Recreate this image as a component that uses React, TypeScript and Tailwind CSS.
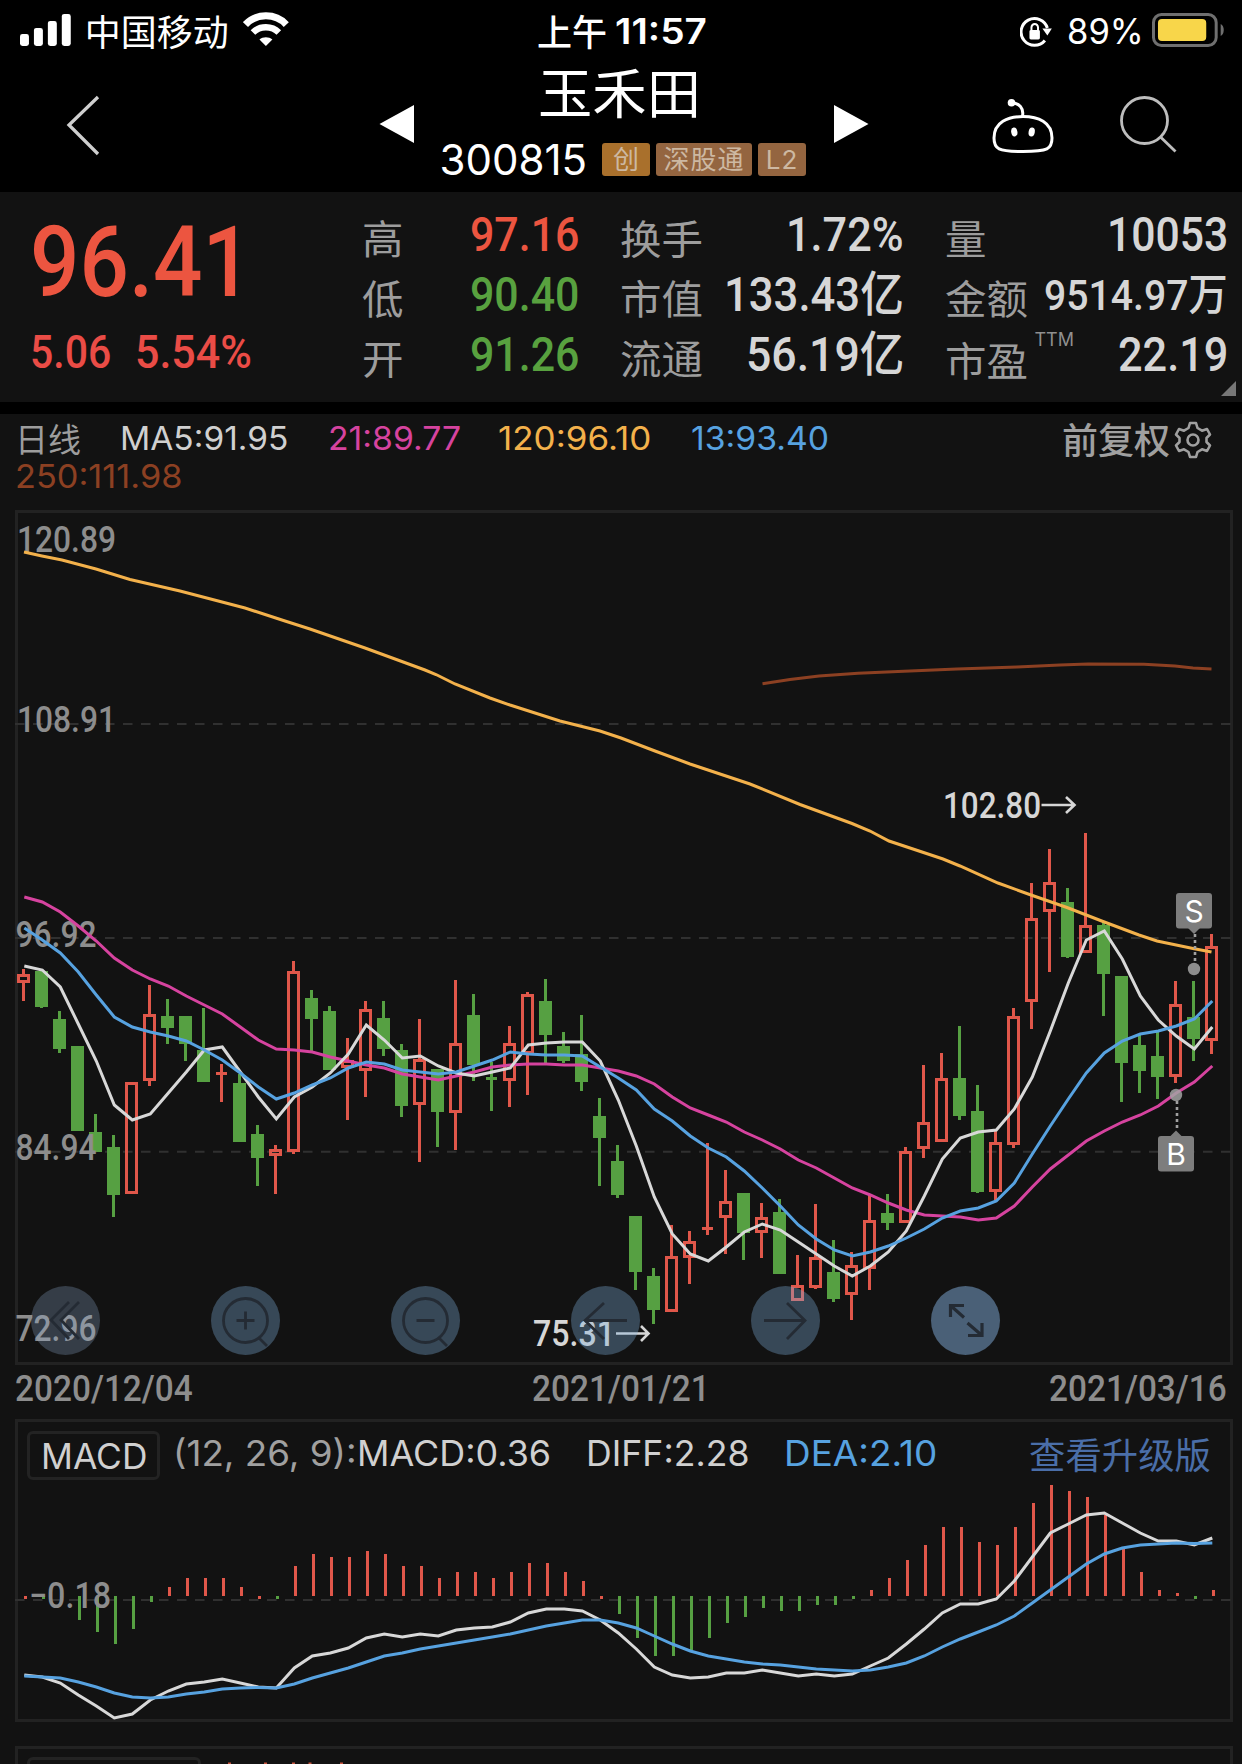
import { useLayoutEffect, useRef, useState } from "react";
import type { ReactNode } from "react";

const RED = "#e0574a";
const GREEN = "#56a042";
const WHITE = "#d8d8d8";
const BLUE = "#57a2e0";
const PINK = "#d6439f";
const ORANGE = "#f3b14b";
const BROWN = "#8c4022";

const DIN = "font-['Roboto','Noto_Sans_CJK_SC',sans-serif] font-medium";
const SANS = "font-['Inter','Noto_Sans_CJK_SC',sans-serif]";
const CJK = "font-['Noto_Sans_CJK_SC',sans-serif]";

/* Single-line text squeezed or stretched horizontally to a fixed width. */
function Fit({ w, box = "", className = "", children }: { w: number; box?: string; className?: string; children: ReactNode }) {
  const ref = useRef<HTMLSpanElement>(null);
  const [scale, setScale] = useState(1);
  useLayoutEffect(() => {
    if (ref.current) setScale(w / ref.current.offsetWidth);
  }, [w]);
  return (
    <span className={`block shrink-0 ${box}`} style={{ width: w }}>
      <span
        ref={ref}
        className={`block w-max origin-left whitespace-pre leading-none ${className}`}
        style={{ transform: `scaleX(${scale})` }}
      >
        {children}
      </span>
    </span>
  );
}

/* [high, body top, body bottom, low, kind]: r rising, g falling, R/G flat day */
type Candle = [number, number, number, number, string];
const CANDLES: Candle[] = [
  [969, 974, 983, 1001, "r"], [971, 971, 1007, 1008, "g"], [1011, 1019, 1049, 1053, "g"], [1046, 1046, 1131, 1131, "g"],
  [1114, 1132, 1152, 1152, "g"], [1135, 1147, 1195, 1217, "g"], [1082, 1082, 1194, 1194, "r"], [985, 1014, 1081, 1086, "r"],
  [999, 1016, 1028, 1044, "g"], [1016, 1016, 1044, 1061, "g"], [1008, 1050, 1082, 1082, "g"], [1064, 1072, 1075, 1102, "R"],
  [1074, 1083, 1142, 1142, "g"], [1125, 1134, 1158, 1186, "g"], [1145, 1149, 1156, 1194, "r"], [961, 971, 1152, 1154, "r"],
  [990, 998, 1019, 1051, "g"], [1006, 1011, 1070, 1070, "g"], [1038, 1060, 1068, 1120, "r"], [1001, 1009, 1071, 1097, "r"],
  [1001, 1018, 1049, 1056, "g"], [1044, 1050, 1106, 1117, "g"], [1019, 1059, 1105, 1162, "r"], [1070, 1069, 1112, 1147, "g"],
  [980, 1043, 1113, 1150, "r"], [994, 1015, 1065, 1081, "g"], [1062, 1077, 1080, 1111, "G"], [1026, 1043, 1081, 1107, "r"],
  [992, 994, 1054, 1095, "r"], [979, 1001, 1035, 1063, "g"], [1032, 1046, 1061, 1063, "g"], [1015, 1054, 1082, 1091, "g"],
  [1098, 1116, 1138, 1186, "g"], [1145, 1161, 1195, 1198, "g"], [1216, 1216, 1272, 1290, "g"], [1268, 1276, 1310, 1324, "g"],
  [1225, 1256, 1312, 1312, "r"], [1231, 1241, 1258, 1284, "r"], [1143, 1227, 1230, 1235, "R"], [1170, 1201, 1218, 1254, "r"],
  [1193, 1193, 1233, 1260, "g"], [1203, 1217, 1233, 1258, "r"], [1199, 1212, 1274, 1274, "g"], [1255, 1285, 1301, 1301, "r"],
  [1204, 1257, 1288, 1289, "r"], [1240, 1272, 1299, 1302, "g"], [1252, 1265, 1295, 1320, "r"], [1194, 1220, 1269, 1290, "r"],
  [1194, 1213, 1223, 1230, "g"], [1147, 1151, 1223, 1223, "r"], [1065, 1122, 1149, 1158, "r"], [1053, 1078, 1142, 1142, "r"],
  [1026, 1078, 1116, 1120, "g"], [1085, 1111, 1192, 1193, "g"], [1130, 1142, 1192, 1200, "r"], [1008, 1016, 1145, 1148, "r"],
  [883, 918, 1002, 1029, "r"], [849, 882, 912, 972, "r"], [888, 902, 957, 958, "g"], [833, 925, 953, 953, "r"],
  [922, 925, 974, 1016, "g"], [976, 976, 1063, 1102, "g"], [1035, 1045, 1071, 1093, "g"], [1032, 1056, 1077, 1099, "g"],
  [981, 1004, 1077, 1083, "r"], [981, 1017, 1039, 1061, "g"], [934, 946, 1041, 1054, "r"],
];

const MA5 = [966, 970, 987, 1024, 1061, 1105, 1120, 1114, 1093, 1072, 1050, 1047, 1072, 1097, 1119, 1097, 1087, 1073, 1054, 1025, 1040, 1058, 1056, 1066, 1073, 1076, 1072, 1068, 1045, 1043, 1042, 1042, 1061, 1100, 1146, 1197, 1234, 1254, 1261, 1247, 1232, 1224, 1230, 1242, 1254, 1266, 1276, 1266, 1252, 1231, 1196, 1159, 1138, 1132, 1130, 1109, 1077, 1031, 983, 940, 931, 959, 996, 1020, 1036, 1049, 1027];
const MA13 = [928, 940, 953, 972, 995, 1017, 1027, 1032, 1036, 1041, 1050, 1060, 1073, 1087, 1099, 1093, 1085, 1078, 1068, 1062, 1064, 1070, 1072, 1074, 1072, 1066, 1060, 1052, 1054, 1055, 1055, 1056, 1067, 1078, 1090, 1109, 1121, 1136, 1148, 1157, 1171, 1188, 1206, 1225, 1239, 1250, 1256, 1252, 1246, 1238, 1229, 1218, 1211, 1208, 1201, 1183, 1154, 1126, 1099, 1073, 1053, 1041, 1034, 1031, 1026, 1019, 1001];
const MA21 = [897, 902, 912, 926, 941, 958, 970, 979, 986, 996, 1005, 1014, 1027, 1040, 1049, 1050, 1052, 1057, 1061, 1065, 1068, 1074, 1077, 1080, 1076, 1072, 1067, 1065, 1064, 1064, 1065, 1065, 1068, 1071, 1076, 1084, 1097, 1108, 1115, 1122, 1132, 1140, 1149, 1160, 1168, 1178, 1188, 1195, 1203, 1210, 1215, 1216, 1217, 1220, 1218, 1206, 1187, 1169, 1155, 1141, 1131, 1122, 1115, 1106, 1093, 1082, 1066];
const MA120 = "24,552 42,556 62,560 96,569 130,579.5 180,591 245,608 285,621 310,629 365,648 425,670 436,674.5 455,684 490,698 510,705 560,721 600,731 621,738 655,751 690,764 750,784 800,804.5 852,823.5 870,831 889,841 943,859 960,866 998,883 1031,895 1067,907.5 1103,921.5 1139,935 1157,941 1193,948.5 1211.5,952";
const MA250 = "762.5,683.7 790,679.5 819,676 858,673.3 898,671.5 957,669 1017,667 1060,665 1088,664 1144,664.3 1175,666 1193,668 1211.5,669";

const DIFF = [1675, 1677, 1683, 1695, 1706, 1718, 1714, 1700, 1691, 1684, 1682, 1679, 1683, 1687, 1688, 1668, 1656, 1653, 1648, 1638, 1634, 1637, 1634, 1636, 1630, 1628, 1627, 1622, 1613, 1609, 1609, 1611, 1620, 1633, 1649, 1667, 1675, 1678, 1677, 1673, 1673, 1670, 1673, 1676, 1674, 1676, 1674, 1666, 1658, 1644, 1629, 1613, 1604, 1604, 1599, 1581, 1557, 1533, 1524, 1515, 1513, 1523, 1533, 1541, 1541, 1545, 1538];
const DEA = [1676, 1677, 1678, 1682, 1687, 1693, 1697, 1698, 1697, 1694, 1692, 1689, 1688, 1687.5, 1688, 1684, 1678, 1673, 1668, 1662, 1656, 1653, 1649, 1646, 1643, 1640, 1637, 1634, 1630, 1626, 1623, 1620, 1620, 1623, 1628, 1636, 1644, 1651, 1656, 1659, 1662, 1664, 1665, 1667, 1669, 1670, 1671, 1670, 1667, 1663, 1656, 1647, 1639, 1632, 1625, 1616, 1603, 1590, 1577, 1564, 1554, 1548, 1545, 1544, 1543, 1543.5, 1543];

/* Histogram bar lengths: positive above the axis, negative below it. */
const BARS = [-3, -3, -3, -24, -36, -48, -33, -6, 9, 18, 18, 18, 9, -3, -3, 30, 42, 39, 39, 45, 42, 30, 30, 18, 24, 24, 18, 24, 33, 33, 24, 15, -3, -18, -42, -60, -60, -54, -42, -27, -21, -12, -15, -15, -9, -9, -3, 6, 18, 36, 51, 69, 69, 54, 51, 69, 93, 111, 105, 99, 81, 47, 24, 6, 3, -3, 6];
const SMALL_RED = new Set([0, 13, 32]);

const series = (ys: number[]) => ys.map((y, i) => `${24.3 + 18 * i},${y}`).join(" ");

function Line({ points, color, width = 3 }: { points: string; color: string; width?: number }) {
  return <polyline points={points} fill="none" stroke={color} strokeWidth={width} />;
}

function Label({ x, y, w, color = "#8d8d8d", children }: { x: number; y: number; w: number; color?: string; children: string }) {
  return (
    <text x={x} y={y} textLength={w} lengthAdjust="spacingAndGlyphs" fill={color} fontSize="36" className={DIN}>
      {children}
    </text>
  );
}

function CandleMark({ c, i }: { c: Candle; i: number }) {
  const [hi, top, bot, lo, kind] = c;
  const x = 23.5 + 18 * i;
  const up = kind === "r" || kind === "R";
  const color = up ? RED : GREEN;
  if (kind === "R" || kind === "G") {
    return (
      <g fill={color}>
        <rect x={x - 1.5} y={hi} width="3" height={lo - hi} />
        <rect x={x - 5.5} y={top} width="11" height="3" />
      </g>
    );
  }
  return (
    <g fill={color}>
      {top > hi && <rect x={x - 1.5} y={hi} width="3" height={top - hi} />}
      {lo > bot && <rect x={x - 1.5} y={bot} width="3" height={lo - bot} />}
      {up ? (
        <rect x={x - 5} y={top + 1.5} width="10" height={bot - top - 3} fill="none" stroke={color} strokeWidth="3" />
      ) : (
        <rect x={x - 6.5} y={top} width="13" height={bot - top} />
      )}
    </g>
  );
}

function StatusBar() {
  return (
    <div className="flex h-[60px] items-center pl-5 pr-4 text-white">
      <svg width="52" height="34" viewBox="0 0 52 34" fill="#fff">
        <rect x="0" y="21" width="9" height="12" rx="2.5" />
        <rect x="14" y="15" width="9" height="18" rx="2.5" />
        <rect x="28" y="8" width="9" height="25" rx="2.5" />
        <rect x="42" y="1" width="9" height="32" rx="2.5" />
      </svg>
      <Fit w={144} box="ml-[13px]" className={`text-[36px] ${CJK}`}>中国移动</Fit>
      <svg className="ml-[14px]" width="46" height="36" viewBox="0 0 46 36" fill="none" stroke="#fff">
        <path d="M2.5 12.5 C13.5 .8 32.500 .8 43.500 12.500" strokeWidth="7" />
        <path d="M10 20.500 C17 13.500 29 13.500 36 20.500" strokeWidth="6.500" />
        <path d="M16.500 27.500 C20 24.500 26 24.500 29.500 27.500 L23 34 Z" fill="#fff" stroke="none" />
      </svg>
      <Fit w={70} box="ml-[248px]" className={`text-[36px] font-medium ${CJK}`}>上午</Fit>
      <Fit w={92} box="ml-[8px] pt-[3px]" className={`text-[35px] font-semibold ${SANS}`}>11:57</Fit>
      <svg className="ml-[313px] mt-[4px]" width="33" height="34" viewBox="0 0 33 34" fill="none" stroke="#fff">
        <path d="M27.500 13 A13.500 13.500 0 1 0 25 25.500" strokeWidth="3" />
        <path d="M22.500 13.500 H32 L27.500 20.500 Z" fill="#fff" stroke="none" />
        <rect x="9.500" y="15" width="10.500" height="9.500" rx="1.500" fill="#fff" stroke="none" />
        <path d="M11.500 15.500 V12.500 a3.300 3.600 0 0 1 6.600 0 V15.500" strokeWidth="2" />
      </svg>
      <Fit w={77} box="ml-[15px] pt-[3px]" className={`text-[35px] ${SANS}`}>89%</Fit>
      <svg className="ml-[8px]" width="74" height="36" viewBox="0 0 74 36">
        <rect x="1.500" y="2.500" width="63" height="31" rx="8" fill="none" stroke="#6f6f6f" strokeWidth="3" />
        <rect x="6" y="7" width="48.500" height="22" rx="4" fill="#f8d64a" />
        <path d="M69 12 a5 6.500 0 0 1 0 12 Z" fill="#6f6f6f" />
      </svg>
    </div>
  );
}

function TitleBar() {
  return (
    <div className="flex h-[132px] text-white">
      <div className="w-[379px] shrink-0 pl-[65px] pt-[35px]">
        <svg width="36" height="62" viewBox="0 0 36 62" fill="none" stroke="#cfcfcf" strokeWidth="3.300">
          <path d="M33 2 L4 30 L33 59" />
        </svg>
      </div>
      <svg className="mt-[44px] shrink-0" width="35" height="40" viewBox="0 0 35 40" fill="#fff">
        <path d="M0.500 20 L35 1 V39 Z" />
      </svg>
      <div className="w-[420px] shrink-0">
        <div className="flex h-[62px] items-center pl-[124px]">
          <Fit w={163} className={`text-[54px] ${CJK}`}>玉禾田</Fit>
        </div>
        <div className="mt-[4px] flex h-[67px] items-center pl-[25.500px]">
          <Fit w={148} className={`text-[42px] ${SANS}`}>300815</Fit>
          <div className="ml-[14.500px] flex gap-[6px] text-[26px] leading-none text-[#cdb8a2]">
            <span className={`flex h-[33px] w-[48px] items-center justify-center rounded-[3px] bg-[#a9702c] pb-[3px] ${CJK}`}>创</span>
            <span className={`flex h-[33px] w-[96px] items-center justify-center rounded-[3px] bg-[#946540] pb-[3px] tracking-[1px] ${CJK}`}>深股通</span>
            <span className={`flex h-[33px] w-[48px] items-center justify-center rounded-[3px] bg-[#946540] tracking-[1px] ${SANS}`}>L2</span>
          </div>
        </div>
      </div>
      <svg className="mt-[44px] shrink-0" width="35" height="40" viewBox="0 0 35 40" fill="#fff">
        <path d="M34.500 20 L0 1 V39 Z" />
      </svg>
      <svg className="ml-[122px] mt-[37px] shrink-0" width="64" height="60" viewBox="991 97 64 60" fill="none" stroke="#fff" strokeWidth="3">
        <path d="M1023 116.500 C1008 116.500 994 122 994 138 C994 149 998 151.500 1023 151.500 C1048 151.500 1052 149 1052 138 C1052 122 1038 116.500 1023 116.500 Z" />
        <path d="M1012 103 C1019 103 1024 108 1022.500 116" />
        <circle cx="1011.500" cy="102.700" r="3.800" fill="#fff" stroke="none" />
        <ellipse cx="1014.300" cy="132" rx="3.100" ry="4.500" fill="#fff" stroke="none" transform="rotate(-10 1014.300 132)" />
        <ellipse cx="1031.700" cy="132" rx="3.100" ry="4.500" fill="#fff" stroke="none" transform="rotate(10 1031.700 132)" />
      </svg>
      <svg className="ml-[63px] mt-[35px] shrink-0" width="62" height="62" viewBox="1118 95 62 62" fill="none" stroke="#bdbdbd" strokeWidth="2.800">
        <circle cx="1144.500" cy="120.500" r="23" />
        <path d="M1160.500 137 L1175.500 151.500" />
      </svg>
    </div>
  );
}

type Cell = { k: string; v: string; w: number; tone: string; size?: string; sup?: string };

function QuoteColumn({ width, cells }: { width: string; cells: Cell[] }) {
  return (
    <div className={`${width} shrink-0`}>
      {cells.map((c) => (
        <div key={c.k} className="flex h-[60px] items-center justify-between">
          <div className={c.sup ? "flex pt-[7px]" : "flex pt-[3px]"}>
            <Fit w={c.k.length * 41.500} box="-ml-[1.500px]" className={`text-[40px] text-[#9d9d9d] ${CJK}`}>{c.k}</Fit>
            {c.sup && <Fit w={40} box="ml-[7px] -mt-[8px]" className={`text-[18px] text-[#8f8f8f] ${SANS}`}>{c.sup}</Fit>}
          </div>
          <Fit w={c.w} className={`${c.size ?? "text-[48px]"} ${c.tone} ${DIN}`}>{c.v}</Fit>
        </div>
      ))}
    </div>
  );
}

function Quote() {
  return (
    <div className="relative flex h-[210px] bg-[#121212]">
      <div className="w-[363px] shrink-0 pl-[30px] pt-[22px]">
        <Fit w={222} className={`text-[98px] text-[#ec5540] ${DIN}`}>96.41</Fit>
        <div className="mt-[16px] flex gap-[24px] text-[#ea4c46]">
          <Fit w={81} className={`text-[47px] ${DIN}`}>5.06</Fit>
          <Fit w={117} className={`text-[47px] ${DIN}`}>5.54%</Fit>
        </div>
      </div>
      <div className="flex gap-[42px] pt-[13px]">
        <QuoteColumn
          width="w-[216px]"
          cells={[
            { k: "高", v: "97.16", w: 109, tone: "text-[#ec5540]" },
            { k: "低", v: "90.40", w: 109, tone: "text-[#58a13f]" },
            { k: "开", v: "91.26", w: 109, tone: "text-[#58a13f]" },
          ]}
        />
        <QuoteColumn
          width="w-[283px]"
          cells={[
            { k: "换手", v: "1.72%", w: 118, tone: "text-[#d6d6d6]" },
            { k: "市值", v: "133.43亿", w: 180, tone: "text-[#d6d6d6]" },
            { k: "流通", v: "56.19亿", w: 158, tone: "text-[#d6d6d6]" },
          ]}
        />
        <QuoteColumn
          width="w-[282px]"
          cells={[
            { k: "量", v: "10053", w: 121, tone: "text-[#d6d6d6]" },
            { k: "金额", v: "9514.97万", w: 184, tone: "text-[#d6d6d6]", size: "text-[43px]" },
            { k: "市盈", v: "22.19", w: 110, tone: "text-[#d6d6d6]", sup: "TTM" },
          ]}
        />
      </div>
      <svg className="absolute bottom-[6px] right-[6px]" width="15" height="15" viewBox="0 0 15 15" fill="#777">
        <path d="M15 0 V15 H0 Z" />
      </svg>
    </div>
  );
}

function Averages() {
  return (
    <div className="h-[96px] pl-[15px] pt-[6px]">
      <div className="flex h-[38px] items-center">
        <Fit w={66} box="-mt-[2px]" className={`text-[33px] text-[#9d9d9d] ${CJK}`}>日线</Fit>
        <Fit w={168} box="ml-[39px]" className={`text-[32.500px] text-[#d0d0d0] ${SANS}`}>MA5:91.95</Fit>
        <Fit w={133} box="ml-[40px]" className={`text-[32.500px] text-[#d6439f] ${SANS}`}>21:89.77</Fit>
        <Fit w={153} box="ml-[37px]" className={`text-[32.500px] text-[#f3b14b] ${SANS}`}>120:96.10</Fit>
        <Fit w={138} box="ml-[40px]" className={`text-[32.500px] text-[#57a2e0] ${SANS}`}>13:93.40</Fit>
        <Fit w={108} box="ml-[233px] -mt-[2px]" className={`text-[36px] font-medium text-[#a0a0a0] ${CJK}`}>前复权</Fit>
        <svg className="ml-[4px] mt-[2px]" width="38" height="38" viewBox="0 0 38 38" fill="none" stroke="#a0a0a0" strokeWidth="2.600" strokeLinejoin="round">
          <path d="M16 2 H22 L23.500 7 L28 9.700 L33 8 L36 13.500 L32.500 17 V21 L36 24.500 L33 30 L28 28.300 L23.500 31 L22 36 H16 L14.500 31 L10 28.300 L5 30 L2 24.500 L5.500 21 V17 L2 13.500 L5 8 L10 9.700 L14.500 7 Z" />
          <circle cx="19" cy="19" r="5.500" />
        </svg>
      </div>
      <div className="flex h-[38px] items-center">
        <Fit w={168} className={`text-[32.500px] text-[#8c4022] ${SANS}`}>250:111.98</Fit>
      </div>
    </div>
  );
}

const ROUND = "flex size-[69px] items-center justify-center rounded-full";

function ChartButtons() {
  const ink = { width: 69, height: 69, viewBox: "0 0 69 69", fill: "none", stroke: "#242b34", strokeWidth: 2.8 };
  return (
    <div className="absolute left-[16px] top-[776px] flex gap-[111px]">
      <button className={`${ROUND} bg-[rgba(140,170,205,0.29)]`}>
        <svg {...ink}><path d="M38 16 L20 34 L38 53 M48 16 L30 34 L48 53" /></svg>
      </button>
      <button className={`${ROUND} bg-[rgba(127,175,218,0.35)]`}>
        <svg {...ink}><circle cx="34.500" cy="34.500" r="22" /><path d="M34.500 25.500 V43.500 M25.500 34.500 H43.500 M48 52 L56 60" /></svg>
      </button>
      <button className={`${ROUND} bg-[rgba(127,175,218,0.35)]`}>
        <svg {...ink}><circle cx="34.500" cy="34.500" r="22" /><path d="M25.500 34.500 H43.500 M48 52 L56 60" /></svg>
      </button>
      <button className={`${ROUND} bg-[rgba(127,175,218,0.35)]`}>
        <svg {...ink}><path d="M56 34.500 H14 M33 17 L14 34.500 L33 53" /></svg>
      </button>
      <button className={`${ROUND} bg-[rgba(127,175,218,0.35)]`}>
        <svg {...ink}><path d="M13 34.500 H54 M36 17 L54 34.500 L36 53" /></svg>
      </button>
      <button className={`${ROUND} bg-[rgba(130,174,220,0.5)]`}>
        <svg {...ink} strokeWidth={3.2}><path d="M19.500 31 V19.500 H33 M19.500 19.500 L33 31.500 M51 37 V49.500 H37 M51 49.500 L36.500 37" /></svg>
      </button>
    </div>
  );
}

function PriceChart() {
  return (
    <div className="relative ml-[15px] h-[855px] w-[1218px]">
      <svg width="1218" height="855" viewBox="15 510 1218 855">
        <rect x="16.500" y="511.500" width="1215" height="852" fill="none" stroke="#222" strokeWidth="3" />
        {[724, 938, 1151.7].map((y) => (
          <path key={y} d={`M15 ${y} H1231`} stroke="#303030" strokeWidth="2" strokeDasharray="9.500 8.500" />
        ))}
        {CANDLES.map((c, i) => <CandleMark key={i} c={c} i={i} />)}
        <Label x={17} y={551.5} w={99}>120.89</Label>
        <Label x={17} y={732} w={99}>108.91</Label>
        <Label x={15.5} y={946.5} w={81}>96.92</Label>
        <Label x={15.5} y={1160} w={81}>84.94</Label>
        <Label x={15.5} y={1341} w={81}>72.96</Label>
        <Line points={series(MA21)} color={PINK} />
        <Line points={MA120} color={ORANGE} />
        <Line points={MA250} color={BROWN} />
        <Line points={series(MA5)} color={WHITE} />
        <Line points={series(MA13)} color={BLUE} />
        <Label x={943} y={818} w={98} color="#d6d6d6">102.80</Label>
        <path d="M1041.500 805 H1074 M1066 797 L1074.500 805 L1066 813" fill="none" stroke="#d6d6d6" strokeWidth="2.600" />
        <Label x={533} y={1346} w={82} color="#d6d6d6">75.31</Label>
        <path d="M616 1333.500 H648 M641 1326 L648.500 1333.500 L641 1341" fill="none" stroke="#d6d6d6" strokeWidth="2.600" />

        <path d="M1195 934 V964 M1177 1101 V1131" stroke="#a0a0a0" strokeWidth="2.600" strokeDasharray="3 3" />
        <g fill="#7d7d7d">
          <rect x="1176" y="893" width="36" height="35.500" rx="3" />
          <path d="M1188 928 H1200 L1194 934 Z" />
          <rect x="1158" y="1136" width="36" height="35.500" rx="3" />
          <path d="M1170 1136.500 H1182 L1176 1130.500 Z" />
        </g>
        <g fill="#a3a3a3" fillOpacity=".85">
          <circle cx="1194" cy="969" r="6.200" />
          <circle cx="1176" cy="1095" r="6.200" />
        </g>
        <g fill="#fff" fontSize="30" textAnchor="middle" className="font-['Inter',sans-serif]">
          <text x="1194" y="922">S</text>
          <text x="1176" y="1165">B</text>
        </g>
      </svg>
      <ChartButtons />
    </div>
  );
}

function MacdPanel() {
  return (
    <div className="relative ml-[15px] h-[303px] w-[1218px]">
      <svg className="absolute inset-0" width="1218" height="303" viewBox="15 1419 1218 303">
        <rect x="16.500" y="1420.500" width="1215" height="300" fill="none" stroke="#222" strokeWidth="3" />
        <path d="M15 1600 H1231" stroke="#303030" strokeWidth="2" strokeDasharray="9.500 8.500" />
        {BARS.map((b, i) => (
          <rect
            key={i}
            x={24 + 18 * i}
            y={b > 0 ? 1596 - b : 1596}
            width="3"
            height={Math.abs(b)}
            fill={b > 0 || SMALL_RED.has(i) ? RED : GREEN}
          />
        ))}
        <Label x={29} y={1608} w={82}>−0.18</Label>
        <Line points={series(DIFF)} color={WHITE} />
        <Line points={series(DEA)} color={BLUE} />
      </svg>
      <div className="relative flex h-[72px] items-start pl-[12px] pt-[12px]">
        <div className="flex h-[49px] w-[133px] items-center justify-center rounded-[6px] border-[3px] border-[#232323] pt-px">
          <Fit w={106} className={`text-[35px] text-[#d0d0d0] ${SANS}`}>MACD</Fit>
        </div>
        <div className="flex h-[44px] items-center">
          <Fit w={184} box="ml-[13px]" className={`text-[35px] text-[#a0a0a0] ${SANS}`}>(12, 26, 9):</Fit>
          <Fit w={194} className={`text-[35px] text-[#d0d0d0] ${SANS}`}>MACD:0.36</Fit>
          <Fit w={164} box="ml-[35px]" className={`text-[35px] text-[#d0d0d0] ${SANS}`}>DIFF:2.28</Fit>
          <Fit w={153} box="ml-[34px]" className={`text-[35px] text-[#57a2e0] ${SANS}`}>DEA:2.10</Fit>
          <Fit w={182} box="ml-[92px]" className={`text-[36px] text-[#4a6ea8] ${CJK}`}>查看升级版</Fit>
        </div>
      </div>
    </div>
  );
}

function Dates() {
  return (
    <div className="flex h-[54px] items-center justify-between px-[15px] pb-[6px] text-[36px] text-[#8d8d8d]">
      <Fit w={178} className={DIN}>2020/12/04</Fit>
      <Fit w={178} className={DIN}>2021/01/21</Fit>
      <Fit w={178} className={DIN}>2021/03/16</Fit>
    </div>
  );
}

export default function App() {
  return (
    <div className="h-[1764px] w-[1242px] overflow-hidden bg-[#121212]">
      <header className="h-[192px] bg-black">
        <StatusBar />
        <TitleBar />
      </header>
      <Quote />
      <div className="h-[12px] bg-black" />
      <Averages />
      <PriceChart />
      <Dates />
      <MacdPanel />
      <div className="ml-[15px] mt-[24px] h-[60px] w-[1218px] border-[3px] border-[#222] pl-[9px] pt-[8px]">
        <div className="flex">
          <div className="h-[49px] w-[174px] rounded-[6px] border-[3px] border-[#232323]" />
          <svg className="mt-[5px]" width="150" height="3" viewBox="201 1762 150 3" fill="#c8553f">
            {[228, 264, 292, 308.5, 340].map((x) => <rect key={x} x={x} y="1762.500" width="3" height="2" />)}
          </svg>
        </div>
      </div>
    </div>
  );
}
